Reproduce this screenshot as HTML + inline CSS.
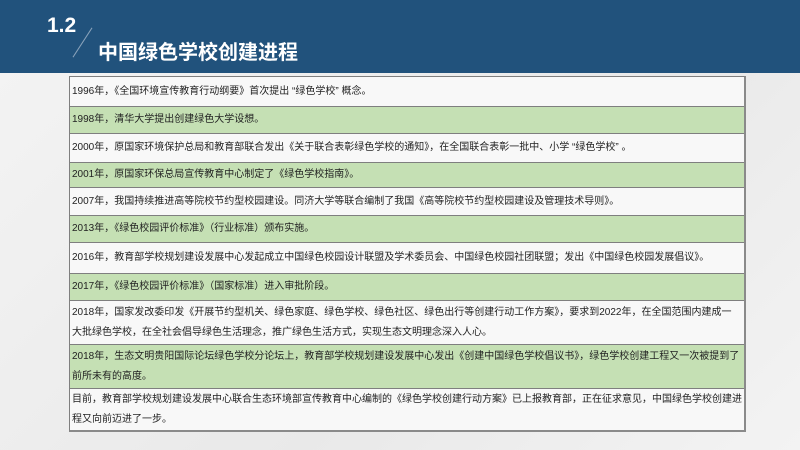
<!DOCTYPE html>
<html><head><meta charset="utf-8"><style>
body{margin:0;width:800px;height:450px;overflow:hidden;background:linear-gradient(135deg,#f4f4f4,#e9e9e9 60%,#f3f3f3);font-family:"Liberation Sans","Noto Sans CJK SC",sans-serif;position:relative}
.hd{position:absolute;left:0;top:0;width:800px;height:73px;background:#21527c}
.num{position:absolute;left:47px;top:14px;color:#fff;font-size:21px;font-weight:bold}
.sl{position:absolute;left:82px;top:25px;width:1px;height:35px;background:#8aa3bb;transform:rotate(33deg)}
.tt{position:absolute;left:98px;top:36px;color:#fff;font-size:20px;font-weight:bold}
.tb{position:absolute;left:69px;top:76px;width:674px;border:1px solid #7f7f7f;border-right:2px solid #8a8a8a;border-bottom:2px solid #8a8a8a}
.r{box-sizing:border-box;border-top:1px solid #7f7f7f;padding:0 8px 0 2px;font-size:10px;color:#222;display:flex;align-items:center;line-height:20px;background:#f8f8f8;overflow:hidden}
.r:first-child{border-top:none}
.g{background:#c5e0b4}
.w{padding-right:0}
</style></head><body>
<div class="hd"><div class="num">1.2</div><div class="sl"></div><div class="tt">中国绿色学校创建进程</div></div>
<div class="tb">
<div class="r" style="height:29px">1996年，《全国环境宣传教育行动纲要》首次提出 “绿色学校” 概念。</div>
<div class="r g" style="height:27px">1998年，清华大学提出创建绿色大学设想。</div>
<div class="r" style="height:29px">2000年，原国家环境保护总局和教育部联合发出《关于联合表彰绿色学校的通知》，在全国联合表彰一批中、小学 “绿色学校” 。</div>
<div class="r g" style="height:25px">2001年，原国家环保总局宣传教育中心制定了《绿色学校指南》。</div>
<div class="r" style="height:28px">2007年，我国持续推进高等院校节约型校园建设。同济大学等联合编制了我国《高等院校节约型校园建设及管理技术导则》。</div>
<div class="r g" style="height:27px">2013年，《绿色校园评价标准》（行业标准）颁布实施。</div>
<div class="r" style="height:31px">2016年，教育部学校规划建设发展中心发起成立中国绿色校园设计联盟及学术委员会、中国绿色校园社团联盟；发出《中国绿色校园发展倡议》。</div>
<div class="r g" style="height:27px">2017年，《绿色校园评价标准》（国家标准）进入审批阶段。</div>
<div class="r" style="height:44px">2018年，国家发改委印发《开展节约型机关、绿色家庭、绿色学校、绿色社区、绿色出行等创建行动工作方案》，要求到2022年，在全国范围内建成一大批绿色学校，在全社会倡导绿色生活理念，推广绿色生活方式，实现生态文明理念深入人心。</div>
<div class="r g w" style="height:44px">2018年，生态文明贵阳国际论坛绿色学校分论坛上，教育部学校规划建设发展中心发出《创建中国绿色学校倡议书》，绿色学校创建工程又一次被提到了前所未有的高度。</div>
<div class="r w" style="height:42px"><div>目前，教育部学校规划建设发展中心联合生态环境部宣传教育中心编制的《绿色学校创建行动方案》已上报教育部，正在征求意见，中国绿色学校创建进<br>程又向前迈进了一步。</div></div>
</div>
</body></html>
